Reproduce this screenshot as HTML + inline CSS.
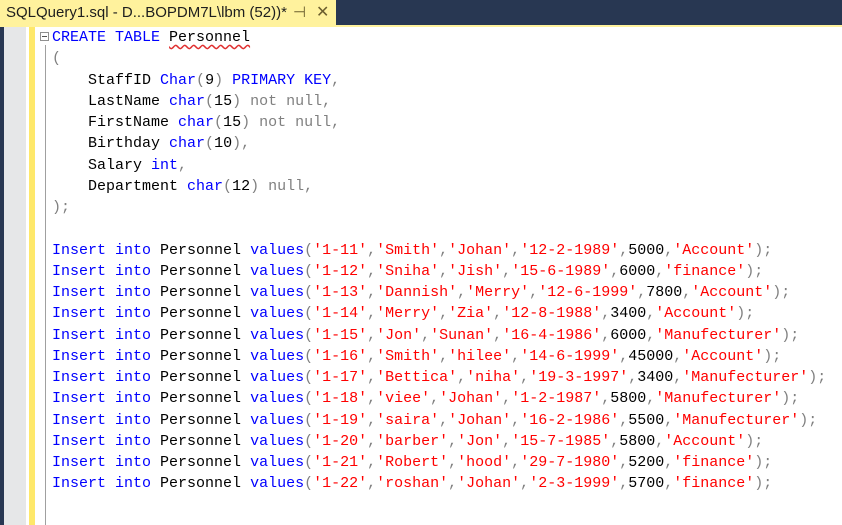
<!DOCTYPE html><html><head><meta charset="utf-8"><style>
body{margin:0;width:842px;height:525px;overflow:hidden;background:#fff;position:relative;font-family:"Liberation Mono",monospace}
.tabbar{position:absolute;left:0;top:0;width:842px;height:25px;background:#283752}
.tab{position:absolute;left:0;top:0;width:336px;height:25px;background:#fff29d;font:15px "Liberation Sans",sans-serif;color:#1e1e1e;line-height:25px;padding-left:6px;box-sizing:border-box}
.yl{position:absolute;left:0;top:25px;width:842px;height:2px;background:#fff29d}
.nav{position:absolute;left:0;top:27px;width:4px;height:498px;background:#283752}
.gr{position:absolute;left:4px;top:27px;width:22px;height:498px;background:#e6e7e8}
.ys{position:absolute;left:29px;top:27px;width:6px;height:498px;background:#fee86a}
.ol{position:absolute;left:45px;top:45px;width:1px;height:480px;background:#a0a0a0}
.box{position:absolute;left:40px;top:32px;width:9px;height:9px;border:1px solid #909090;background:#fff;box-sizing:border-box}
.box:after{content:"";position:absolute;left:1px;top:3px;width:5px;height:1px;background:#555}
pre{position:absolute;left:52px;top:27px;margin:0;font:15px/21.25px "Liberation Mono",monospace;color:#000}
.k{color:#0000ff}.s{color:#ff0000}.p{color:#808080}
.u{text-decoration:underline wavy #e03030;text-underline-offset:3px}
</style></head><body>
<div class="tabbar"></div>
<div class="tab">SQLQuery1.sql - D...BOPDM7L\lbm (52))*<span style="position:absolute;left:293px;color:#6b5e2e">⊣</span><span style="position:absolute;left:316px;color:#6b5e2e;font-size:16px">✕</span></div>
<div class="yl"></div><div class="nav"></div><div class="gr"></div><div class="ys"></div><div class="ol"></div><div class="box"></div>
<pre><span class="k">CREATE TABLE</span> <span class="u">Personnel</span>
<span class="p">(</span>
    StaffID <span class="k">Char</span><span class="p">(</span>9<span class="p">)</span> <span class="k">PRIMARY KEY</span><span class="p">,</span>
    LastName <span class="k">char</span><span class="p">(</span>15<span class="p">)</span> <span class="p">not null,</span>
    FirstName <span class="k">char</span><span class="p">(</span>15<span class="p">)</span> <span class="p">not null,</span>
    Birthday <span class="k">char</span><span class="p">(</span>10<span class="p">),</span>
    Salary <span class="k">int</span><span class="p">,</span>
    Department <span class="k">char</span><span class="p">(</span>12<span class="p">)</span> <span class="p">null,</span>
<span class="p">);</span>

<span class="k">Insert into</span> Personnel <span class="k">values</span><span class="p">(</span><span class="s">'1-11'</span><span class="p">,</span><span class="s">'Smith'</span><span class="p">,</span><span class="s">'Johan'</span><span class="p">,</span><span class="s">'12-2-1989'</span><span class="p">,</span>5000<span class="p">,</span><span class="s">'Account'</span><span class="p">);</span>
<span class="k">Insert into</span> Personnel <span class="k">values</span><span class="p">(</span><span class="s">'1-12'</span><span class="p">,</span><span class="s">'Sniha'</span><span class="p">,</span><span class="s">'Jish'</span><span class="p">,</span><span class="s">'15-6-1989'</span><span class="p">,</span>6000<span class="p">,</span><span class="s">'finance'</span><span class="p">);</span>
<span class="k">Insert into</span> Personnel <span class="k">values</span><span class="p">(</span><span class="s">'1-13'</span><span class="p">,</span><span class="s">'Dannish'</span><span class="p">,</span><span class="s">'Merry'</span><span class="p">,</span><span class="s">'12-6-1999'</span><span class="p">,</span>7800<span class="p">,</span><span class="s">'Account'</span><span class="p">);</span>
<span class="k">Insert into</span> Personnel <span class="k">values</span><span class="p">(</span><span class="s">'1-14'</span><span class="p">,</span><span class="s">'Merry'</span><span class="p">,</span><span class="s">'Zia'</span><span class="p">,</span><span class="s">'12-8-1988'</span><span class="p">,</span>3400<span class="p">,</span><span class="s">'Account'</span><span class="p">);</span>
<span class="k">Insert into</span> Personnel <span class="k">values</span><span class="p">(</span><span class="s">'1-15'</span><span class="p">,</span><span class="s">'Jon'</span><span class="p">,</span><span class="s">'Sunan'</span><span class="p">,</span><span class="s">'16-4-1986'</span><span class="p">,</span>6000<span class="p">,</span><span class="s">'Manufecturer'</span><span class="p">);</span>
<span class="k">Insert into</span> Personnel <span class="k">values</span><span class="p">(</span><span class="s">'1-16'</span><span class="p">,</span><span class="s">'Smith'</span><span class="p">,</span><span class="s">'hilee'</span><span class="p">,</span><span class="s">'14-6-1999'</span><span class="p">,</span>45000<span class="p">,</span><span class="s">'Account'</span><span class="p">);</span>
<span class="k">Insert into</span> Personnel <span class="k">values</span><span class="p">(</span><span class="s">'1-17'</span><span class="p">,</span><span class="s">'Bettica'</span><span class="p">,</span><span class="s">'niha'</span><span class="p">,</span><span class="s">'19-3-1997'</span><span class="p">,</span>3400<span class="p">,</span><span class="s">'Manufecturer'</span><span class="p">);</span>
<span class="k">Insert into</span> Personnel <span class="k">values</span><span class="p">(</span><span class="s">'1-18'</span><span class="p">,</span><span class="s">'viee'</span><span class="p">,</span><span class="s">'Johan'</span><span class="p">,</span><span class="s">'1-2-1987'</span><span class="p">,</span>5800<span class="p">,</span><span class="s">'Manufecturer'</span><span class="p">);</span>
<span class="k">Insert into</span> Personnel <span class="k">values</span><span class="p">(</span><span class="s">'1-19'</span><span class="p">,</span><span class="s">'saira'</span><span class="p">,</span><span class="s">'Johan'</span><span class="p">,</span><span class="s">'16-2-1986'</span><span class="p">,</span>5500<span class="p">,</span><span class="s">'Manufecturer'</span><span class="p">);</span>
<span class="k">Insert into</span> Personnel <span class="k">values</span><span class="p">(</span><span class="s">'1-20'</span><span class="p">,</span><span class="s">'barber'</span><span class="p">,</span><span class="s">'Jon'</span><span class="p">,</span><span class="s">'15-7-1985'</span><span class="p">,</span>5800<span class="p">,</span><span class="s">'Account'</span><span class="p">);</span>
<span class="k">Insert into</span> Personnel <span class="k">values</span><span class="p">(</span><span class="s">'1-21'</span><span class="p">,</span><span class="s">'Robert'</span><span class="p">,</span><span class="s">'hood'</span><span class="p">,</span><span class="s">'29-7-1980'</span><span class="p">,</span>5200<span class="p">,</span><span class="s">'finance'</span><span class="p">);</span>
<span class="k">Insert into</span> Personnel <span class="k">values</span><span class="p">(</span><span class="s">'1-22'</span><span class="p">,</span><span class="s">'roshan'</span><span class="p">,</span><span class="s">'Johan'</span><span class="p">,</span><span class="s">'2-3-1999'</span><span class="p">,</span>5700<span class="p">,</span><span class="s">'finance'</span><span class="p">);</span></pre>
</body></html>
